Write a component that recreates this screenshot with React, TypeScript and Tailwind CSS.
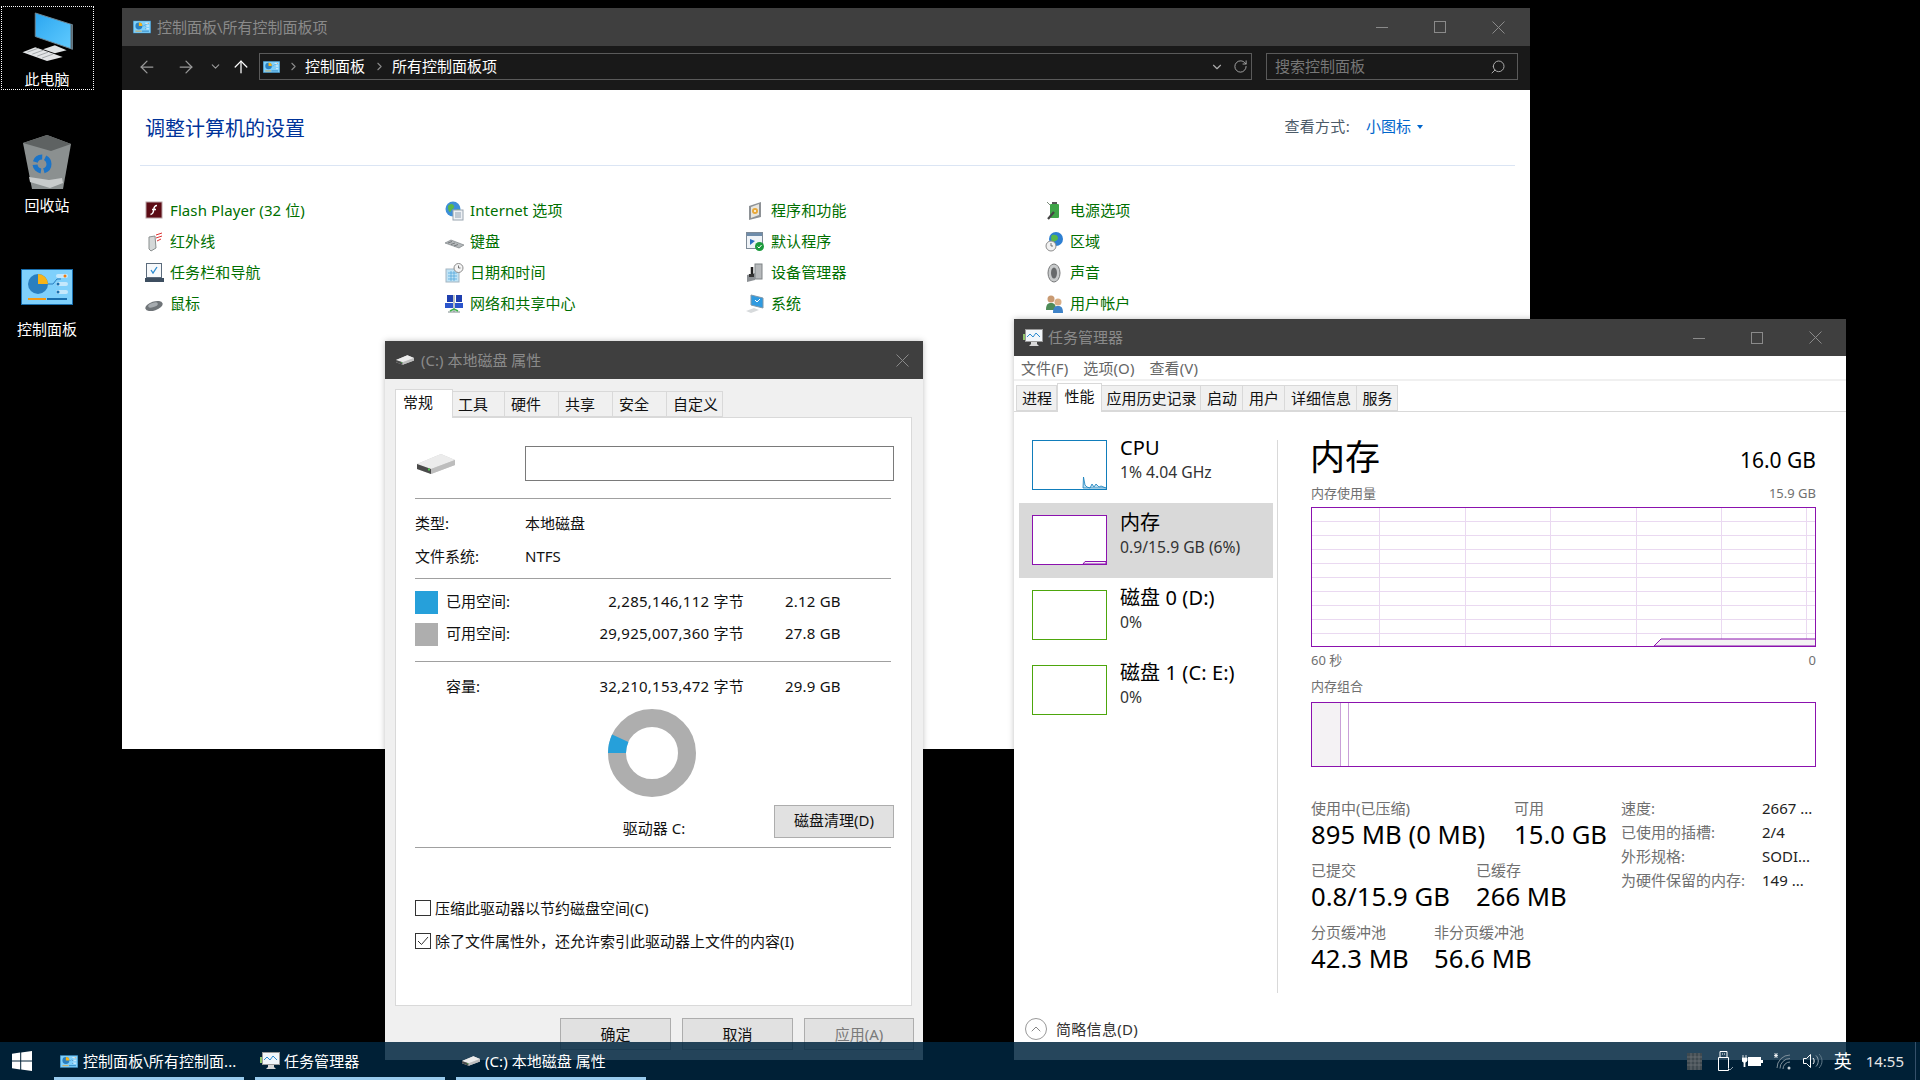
import React from "react";
import { ArrowLeft, ArrowRight, ArrowUp, ChevronDown, ChevronRight, ChevronUp, RotateCw, Search } from "lucide-react";

// small window chrome pieces
const CaptionButtons = ({ gap }: { gap: string }) => (
  <div className={`ml-auto flex items-center ${gap}`}>
    <svg width="12" height="12" viewBox="0 0 12 12" stroke="#8a8a8a" fill="none"><path d="M0 6.5h12" /></svg>
    <svg width="12" height="12" viewBox="0 0 12 12" stroke="#8a8a8a" fill="none"><rect x="0.5" y="0.5" width="11" height="11" /></svg>
    <CloseX />
  </div>
);

const CloseX = () => (
  <svg width="13" height="13" viewBox="0 0 13 13" stroke="#8a8a8a" fill="none"><path d="M0.5 0.5l12 12M12.5 0.5l-12 12" /></svg>
);

const ControlPanelIcon = ({ w, h }: { w: number; h: number }) => (
  <svg width={w} height={h} viewBox="0 0 52 36">
    <rect x="0.5" y="0.5" width="51" height="35" fill="#7fd0fb" stroke="#1a6fae" />
    <circle cx="17" cy="15" r="10" fill="#2a7fc0" />
    <path d="M17 5a10 10 0 0 1 10 10H17z" fill="#f8b418" />
    <path d="M27 15h5l4-5h4" stroke="#2a7fc0" fill="none" />
    <rect x="35" y="5" width="12" height="4" rx="2" fill="#c4e8fc" />
    <rect x="35" y="13" width="12" height="4" rx="2" fill="#c4e8fc" />
    <rect x="35" y="21" width="12" height="4" rx="2" fill="#c4e8fc" />
    <circle cx="44" cy="7" r="1.5" fill="#f07c10" />
    <circle cx="37" cy="15" r="1.5" fill="#1a6fae" />
    <circle cx="37" cy="23" r="1.5" fill="#1a6fae" />
    <path d="M7 30h18" stroke="#f59a14" strokeWidth="2" />
    <path d="M26 30h20" stroke="#1a6fae" strokeWidth="2" />
  </svg>
);

const DriveIcon = ({ w, h }: { w: number; h: number }) => (
  <svg width={w} height={h} viewBox="0 0 38 20">
    <path d="M0 10L24 0l14 6v5L14 20 0 15z" fill="#cfcfcf" />
    <path d="M0 10l14 5 24-9-14-6z" fill="#ececec" />
    <path d="M0 10l14 5v5L0 15z" fill="#4a4a4a" />
    <path d="M14 15l24-9v5L14 20z" fill="#bdbdbd" />
    <rect x="11" y="14.5" width="2" height="2" fill="#4fc24f" />
  </svg>
);

const TaskManagerIcon = () => (
  <svg width="20" height="18" viewBox="0 0 20 18">
    <rect x="2.5" y="0.5" width="17" height="12" fill="#f2f6fa" stroke="#9a9a9a" />
    <path d="M4 8l3-3 3 3 3-4 4 4" stroke="#2a8ad0" fill="none" />
    <rect x="0" y="5" width="2" height="6" fill="#8fc46a" />
    <path d="M8 13h6v2l2 2H6l2-2z" fill="#d8d8d8" />
  </svg>
);

// 16px-ish applet icons of the control panel list
const AppletIcon = ({ name }: { name: string }) => {
  const box = { width: 19, height: 20, viewBox: "0 0 19 20" };
  switch (name) {
    case "flash":
      return (
        <svg {...box}>
          <rect x="1" y="1" width="16" height="16" fill="#5c0b14" stroke="#b9a3a5" />
          <path d="M12 4.5c-3 0-3 2-3.3 4.5S8 13 5.5 13.5M7 8.5h4" stroke="#fff" strokeWidth="1.5" fill="none" />
        </svg>
      );
    case "infrared":
      return (
        <svg {...box}>
          <path d="M4 5l6-1 1 12-5 3-2-2z" fill="#d5d8d8" stroke="#8a8f8f" />
          <path d="M11 3l6-2M11 6l6-2M12 9l4-2" stroke="#d33" />
        </svg>
      );
    case "taskbar":
      return (
        <svg {...box}>
          <rect x="1.5" y="0.5" width="15" height="14" fill="#f7f9fb" stroke="#5b6b7c" />
          <path d="M6 7l2 3 4-6" stroke="#2a8ad0" fill="none" strokeWidth="1.3" />
          <rect x="0" y="15" width="19" height="4" fill="#3d4e60" />
        </svg>
      );
    case "mouse":
      return (
        <svg {...box}>
          <ellipse cx="9" cy="12" rx="9" ry="4.5" transform="rotate(-18 9 12)" fill="#6f7478" />
          <ellipse cx="8" cy="11" rx="5" ry="2.2" transform="rotate(-18 8 11)" fill="#a6abaf" />
        </svg>
      );
    case "internet":
      return (
        <svg {...box}>
          <circle cx="8" cy="8" r="7.5" fill="#3d8fd8" />
          <path d="M3 5c3-3 5-2 6 0s-2 3-3 5-3 1-3-5zM10 10l3-2 2 1-2 4z" fill="#5cb848" />
          <rect x="8" y="9" width="10" height="10" fill="#eef1f5" stroke="#9aa5b0" />
          <path d="M10 12h6M10 14h6M10 16h6" stroke="#8fa0b0" />
        </svg>
      );
    case "keyboard":
      return (
        <svg {...box}>
          <path d="M0 11l6-3 13 5-5 3z" fill="#b4b8ba" stroke="#6f7578" strokeWidth="0.6" />
          <path d="M3 11l4-1.5M6 12.5l4-1.5M9 14l4-1.5" stroke="#5a5f62" strokeWidth="0.7" />
        </svg>
      );
    case "datetime":
      return (
        <svg {...box}>
          <rect x="1" y="6" width="13" height="13" fill="#bfe3f6" stroke="#a5b6c2" />
          <path d="M3 10h9M3 13h9M3 16h9M6 8v10M9 8v10" stroke="#4aa0d8" strokeWidth="0.7" />
          <circle cx="13.5" cy="5" r="4.5" fill="#f4f4f4" stroke="#8c8c8c" />
          <path d="M13.5 2.5V5h2" stroke="#555" fill="none" strokeWidth="0.8" />
        </svg>
      );
    case "network":
      return (
        <svg {...box}>
          <rect x="2" y="1" width="6" height="7" fill="#1f3fae" />
          <rect x="11" y="1" width="6" height="7" fill="#1f3fae" />
          <rect x="0" y="9" width="8" height="5" fill="#2b55cc" />
          <rect x="10" y="9" width="8" height="5" fill="#2b55cc" />
          <path d="M9 1v17M3 18h12" stroke="#7a8a8a" />
          <path d="M5 17l4-2 4 2" stroke="#3fb04a" fill="none" strokeWidth="1.5" />
        </svg>
      );
    case "programs":
      return (
        <svg {...box}>
          <path d="M3 5l12-4v15l-12 3z" fill="#8e9296" />
          <path d="M5 6l8-3v11l-8 3z" fill="#e8e6df" />
          <circle cx="9" cy="10" r="3" fill="#e9a93a" />
          <circle cx="9" cy="10" r="1" fill="#fff" />
        </svg>
      );
    case "defaults":
      return (
        <svg {...box}>
          <rect x="0.5" y="0.5" width="16" height="16" fill="#eff3f7" stroke="#7d8a97" />
          <rect x="1" y="1" width="15" height="3" fill="#6e8caa" />
          <path d="M4 7l5 2-5 4z" fill="#2a6fc0" />
          <circle cx="13.5" cy="14.5" r="4.5" fill="#1c9a3c" />
          <path d="M11.5 14.5l1.500 1.500 2.500-3" stroke="#fff" fill="none" />
        </svg>
      );
    case "devices":
      return (
        <svg {...box}>
          <rect x="9" y="1" width="7" height="15" fill="#b7babc" stroke="#7f8386" />
          <path d="M1 12l8-2v7l-8 2z" fill="#8c9094" />
          <path d="M6 4v8" stroke="#222" strokeWidth="2.5" />
          <rect x="3" y="11" width="5" height="3" fill="#333" />
        </svg>
      );
    case "system":
      return (
        <svg {...box}>
          <path d="M5 1l12 3v10L5 11z" fill="#2f9ae0" stroke="#8097a8" />
          <path d="M9 6l2 2 3-3" stroke="#fff" fill="none" />
          <path d="M0 17l8-3 5 2-8 3z" fill="#d7dadc" />
        </svg>
      );
    case "power":
      return (
        <svg {...box}>
          <rect x="5" y="3" width="9" height="14" rx="1" fill="#3ea447" />
          <rect x="7" y="1" width="5" height="2" fill="#555" />
          <path d="M9 11L3 18" stroke="#444" strokeWidth="2.2" />
          <path d="M2 1l3 3" stroke="#7b8b7b" />
        </svg>
      );
    case "region":
      return (
        <svg {...box}>
          <circle cx="11" cy="7" r="7" fill="#2d7fd2" />
          <path d="M7 3c3-1 6 0 6 3s-4 3-5 5-3-6-1-8z" fill="#5ab84a" />
          <circle cx="6" cy="14" r="5" fill="#f1f1f1" stroke="#8c8c8c" />
          <path d="M6 11v3h2" stroke="#555" fill="none" strokeWidth="0.8" />
        </svg>
      );
    case "sound":
      return (
        <svg {...box}>
          <ellipse cx="9" cy="10" rx="6" ry="9" fill="#c8cacb" stroke="#77797a" />
          <ellipse cx="9" cy="10" rx="3" ry="5.5" fill="#67696b" />
        </svg>
      );
    default:
      return (
        <svg {...box}>
          <circle cx="6" cy="5" r="3.5" fill="#c99a72" />
          <path d="M1 16c0-6 2-7 5-7s5 1 5 7z" fill="#4e8b58" />
          <circle cx="13" cy="8" r="3.5" fill="#d9ae86" />
          <path d="M8 19c0-6 2-7 5-7s5 1 5 7z" fill="#3f83c8" />
        </svg>
      );
  }
};

const applets = [
  ["flash", "Flash Player (32 位)"],
  ["internet", "Internet 选项"],
  ["programs", "程序和功能"],
  ["power", "电源选项"],
  ["infrared", "红外线"],
  ["keyboard", "键盘"],
  ["defaults", "默认程序"],
  ["region", "区域"],
  ["taskbar", "任务栏和导航"],
  ["datetime", "日期和时间"],
  ["devices", "设备管理器"],
  ["sound", "声音"],
  ["mouse", "鼠标"],
  ["network", "网络和共享中心"],
  ["system", "系统"],
  ["users", "用户帐户"],
];

const ControlPanelWindow = () => (
  <div className="absolute left-[122px] top-[8px] flex h-[741px] w-[1408px] flex-col bg-white">
    <div className="flex h-[38px] shrink-0 items-center bg-[#3f3f3f] pl-[11px] pr-[25px] text-[15px] text-[#8a8a8a]">
      <ControlPanelIcon w={18} h={14} />
      <span className="ml-[6px]">控制面板\所有控制面板项</span>
      <CaptionButtons gap="gap-[46px]" />
    </div>
    <div className="flex h-[44px] shrink-0 items-center bg-[#191919] pb-[3px] text-[15px] text-white">
      <ArrowLeft className="ml-[15px] text-[#9a9a9a]" size={20} strokeWidth={1.5} />
      <ArrowRight className="ml-[19px] text-[#9a9a9a]" size={20} strokeWidth={1.5} />
      <ChevronDown className="ml-[13px] text-[#9a9a9a]" size={13} strokeWidth={2} />
      <ArrowUp className="ml-[9px] text-white" size={20} strokeWidth={1.5} />
      <div className="ml-[8px] flex h-[27px] w-[993px] items-center border border-[#5a5a5a] pl-[3px]">
        <ControlPanelIcon w={17} h={14} />
        <ChevronRight className="ml-[7px] text-[#8a8a8a]" size={13} />
        <span className="ml-[5px]">控制面板</span>
        <ChevronRight className="ml-[8px] text-[#8a8a8a]" size={13} />
        <span className="ml-[6px]">所有控制面板项</span>
        <ChevronDown className="ml-auto text-[#aaaaaa]" size={14} strokeWidth={2} />
        <RotateCw className="ml-[9px] mr-[3px] text-[#aaaaaa]" size={15} strokeWidth={1.5} />
      </div>
      <div className="ml-[14px] flex h-[27px] w-[252px] items-center border border-[#5a5a5a] pl-[8px] pr-[11px] text-[#777777]">
        搜索控制面板
        <Search className="ml-auto -scale-x-100 text-[#aaaaaa]" size={16} strokeWidth={1.5} />
      </div>
    </div>
    <div className="ml-[18px] mr-[15px] flex h-[76px] shrink-0 items-center border-b border-[#dbe5f4] pl-[5px] pr-[92px]">
      <h1 className="pt-[2px] text-[20px] text-[#003399]">调整计算机的设置</h1>
      <span className="ml-auto pb-[2px] text-[15px] tracking-[0.3px] text-[#4c5a68]">查看方式:</span>
      <span className="ml-[16px] pb-[2px] text-[15px] text-[#0066cc]">小图标</span>
      <span className="mb-[2px] ml-[6px] h-0 w-0 border-x-[3px] border-t-[4px] border-x-transparent border-t-[#0066cc]" />
    </div>
    <div className="grid grid-cols-[300px_301px_299px_300px] pl-[23px] pt-[29px] text-[15px] tracking-[0.1px] text-[#006f00]">
      {applets.map(([icon, label]) => (
        <div key={icon} className="flex h-[31px] items-center">
          <div className="w-[25px]">
            <AppletIcon name={icon} />
          </div>
          {label}
        </div>
      ))}
    </div>
  </div>
);

const DialogTab = ({ label, active, w, pad }: { label: string; active?: boolean; w: string; pad: string }) => (
  <div
    className={`flex items-center border border-[#d9d9d9] ${w} ${pad} ${
      active ? "z-10 -mb-px h-[29px] border-b-0 bg-white pb-[3px]" : "-ml-px h-[26px] bg-[#f0f0f0]"
    }`}
  >
    {label}
  </div>
);

const Rule = ({ className }: { className: string }) => <div className={`h-px w-[476px] bg-[#a0a0a0] ${className}`} />;

const DialogButton = ({ label, className }: { label: string; className?: string }) => (
  <div className={`flex items-center justify-center border border-[#adadad] bg-[#e1e1e1] ${className}`}>{label}</div>
);

const SpaceRow = ({ swatch, label, bytes, size, className }: { swatch?: string; label: string; bytes: string; size: string; className?: string }) => (
  <div className={`flex h-[32px] items-center ${className}`}>
    <div className={`h-[23px] w-[23px] ${swatch}`} />
    <span className="ml-[8px] w-[100px] pb-[2px]">{label}</span>
    <span className="w-[198px] pb-[2px] text-right tracking-[0.25px]">{bytes}</span>
    <span className="ml-[41px] pb-[2px] tracking-[0.2px]">{size}</span>
  </div>
);

const Check = ({ checked }: { checked?: boolean }) => (
  <div className="flex h-[16px] w-[16px] shrink-0 items-center justify-center border border-[#333333] bg-white">
    {checked && (
      <svg width="12" height="10" viewBox="0 0 12 10" fill="none" stroke="#333"><path d="M1 5l3.500 3.500L11 1" /></svg>
    )}
  </div>
);

const PropertiesDialog = () => (
  <div className="absolute left-[385px] top-[341px] flex h-[719px] w-[538px] flex-col bg-[#f0f0f0] text-[15px] text-[#111111] shadow-[0_0_6px_rgba(0,0,0,0.25)]">
    <div className="flex h-[38px] shrink-0 items-center bg-[#3f3f3f] pl-[11px] pr-[14px] text-[#8a8a8a]">
      <DriveIcon w={18} h={10} />
      <span className="ml-[7px]">(C:) 本地磁盘 属性</span>
      <div className="ml-auto"><CloseX /></div>
    </div>
    <div className="flex h-[38px] shrink-0 items-end pl-[10px]">
      <DialogTab label="常规" active w="w-[58px]" pad="pl-[7px]" />
      <DialogTab label="工具" w="w-[53px]" pad="pl-[5px]" />
      <DialogTab label="硬件" w="w-[55px]" pad="pl-[6px]" />
      <DialogTab label="共享" w="w-[55px]" pad="pl-[6px]" />
      <DialogTab label="安全" w="w-[55px]" pad="pl-[6px]" />
      <DialogTab label="自定义" w="w-[57px]" pad="pl-[6px]" />
    </div>
    <div className="ml-[10px] h-[589px] w-[517px] border border-[#d9d9d9] bg-white pl-[19px] pt-[28px]">
      <div className="flex h-[35px] items-center">
        <div className="w-[110px] pl-[2px]"><DriveIcon w={38} h={20} /></div>
        <div className="h-[35px] w-[369px] border border-[#7a7a7a]" />
      </div>
      <Rule className="mt-[17px]" />
      <div className="mt-[8px] flex h-[33px] items-center"><span className="w-[110px]">类型:</span>本地磁盘</div>
      <div className="flex h-[33px] items-center"><span className="w-[110px]">文件系统:</span>NTFS</div>
      <Rule className="mt-[5px]" />
      <SpaceRow className="mt-[7px]" swatch="bg-[#26a0da]" label="已用空间:" bytes="2,285,146,112 字节" size="2.12 GB" />
      <SpaceRow swatch="bg-[#aeaeae]" label="可用空间:" bytes="29,925,007,360 字节" size="27.8 GB" />
      <Rule className="mt-[11px]" />
      <SpaceRow className="mt-[9px]" label="容量:" bytes="32,210,153,472 字节" size="29.9 GB" />
      <svg className="ml-[193px] mt-[6px]" width="88" height="88" viewBox="0 0 88 88">
        <circle cx="44" cy="44" r="35" fill="none" stroke="#aeaeae" strokeWidth="18" />
        <path d="M0 44A44 44 0 0 1 4.100 25.400L20.400 33A26 26 0 0 0 18 44z" fill="#26a0da" />
      </svg>
      <div className="mt-[8px] flex h-[33px]">
        <div className="w-[359px] pl-[119px] pt-[15px] text-center leading-[17px]">驱动器 C:</div>
        <DialogButton label="磁盘清理(D)" className="w-[120px] pb-[2px]" />
      </div>
      <Rule className="mt-[9px]" />
      <div className="mt-[46px] flex h-[28px] items-center gap-[4px]"><Check />压缩此驱动器以节约磁盘空间(C)</div>
      <div className="mt-[5px] flex h-[28px] items-center gap-[4px]"><Check checked />除了文件属性外，还允许索引此驱动器上文件的内容(I)</div>
    </div>
    <div className="ml-[175px] mt-[12px] flex h-[32px] gap-[11px]">
      <DialogButton label="确定" className="w-[111px]" />
      <DialogButton label="取消" className="w-[111px]" />
      <DialogButton label="应用(A)" className="w-[110px] bg-[#cccccc] text-[#7a7a7a]" />
    </div>
  </div>
);

const ManagerTab = ({ label, active, w }: { label: string; active?: boolean; w: string }) => (
  <div
    className={`flex items-center justify-center border border-[#d9d9d9] ${w} ${
      active ? "z-10 -mb-px h-[29px] border-b-0 bg-white pb-[3px]" : "-ml-px h-[26px] bg-[#f0f0f0] pl-[1px] pt-[1px]"
    }`}
  >
    {label}
  </div>
);

const Resource = ({ title, sub, border, selected, children }: { title: string; sub: string; border: string; selected?: boolean; children?: React.ReactNode }) => (
  <div className={`flex h-[75px] w-[254px] items-start pl-[13px] pt-[8px] ${selected ? "bg-[#d9d9d9]" : ""}`}>
    <div className={`mt-[4px] h-[50px] w-[75px] shrink-0 border bg-white ${border}`}>{children}</div>
    <div className="ml-[13px]">
      <div className="h-[24px] text-[20px] leading-[24px] tracking-[0.1px] text-black">{title}</div>
      <div className="h-[24px] text-[15.700px] leading-[24px] text-[#333333]">{sub}</div>
    </div>
  </div>
);

const Stat = ({ label, value, w }: { label: string; value: string; w: string }) => (
  <div className={w}>
    <div className="h-[20px] text-[15px] leading-[18px] text-[#707070]">{label}</div>
    <div className="h-[32px] whitespace-nowrap text-[25.700px] leading-[31px] text-black">{value}</div>
  </div>
);

const MemoryChart = () => {
  const rows = [14, 28, 42, 56, 70, 84, 98, 112, 126];
  const cols = [68, 154, 239, 325, 410, 495];
  return (
    <svg className="mt-[3px] block" width="505" height="140" viewBox="0 0 505 140">
      {rows.map((y) => (
        <path key={y} d={`M0 ${y + 0.5}H505`} stroke="#ead9f1" />
      ))}
      {cols.map((x) => (
        <path key={x} d={`M${x + 0.5} 0V140`} stroke="#ead9f1" />
      ))}
      <path d="M343 139L350 132H505V139z" fill="#f4f2f4" stroke="#8b12ae" strokeWidth="1" />
      <rect x="0.5" y="0.5" width="504" height="139" fill="none" stroke="#8b12ae" />
    </svg>
  );
};

const TaskManager = () => (
  <div className="absolute left-[1014px] top-[319px] flex h-[741px] w-[832px] flex-col bg-white text-[15px] shadow-[0_0_6px_rgba(0,0,0,0.25)]">
    <div className="flex h-[37px] shrink-0 items-center bg-[#3f3f3f] pl-[9px] pr-[24px] text-[#8a8a8a]">
      <TaskManagerIcon />
      <span className="ml-[5px]">任务管理器</span>
      <CaptionButtons gap="gap-[46px]" />
    </div>
    <div className="flex h-[25px] shrink-0 items-center gap-[15px] border-b-2 border-[#f0f0f0] pl-[7px] pt-[1px] tracking-[0.1px] text-[#666666]">
      <span>文件(F)</span>
      <span>选项(O)</span>
      <span>查看(V)</span>
    </div>
    <div className="flex h-[31px] shrink-0 items-end border-b border-[#d9d9d9] pl-[3px] text-[#111111]">
      <ManagerTab label="进程" w="w-[41px]" />
      <ManagerTab label="性能" active w="w-[45px]" />
      <ManagerTab label="应用历史记录" w="w-[100px]" />
      <ManagerTab label="启动" w="w-[43px]" />
      <ManagerTab label="用户" w="w-[43px]" />
      <ManagerTab label="详细信息" w="w-[73px]" />
      <ManagerTab label="服务" w="w-[42px]" />
    </div>
    <div className="flex h-[602px] shrink-0">
      <div className="ml-[5px] w-[258px] pt-[16px]">
        <Resource title="CPU" sub="1% 4.04 GHz" border="border-[#117dbb]">
          <svg width="73" height="48" viewBox="0 0 73 48">
            <path d="M50 47L50.500 36L52 44L54 46L57 47L59 43L61 46L63 43L66 46L68 45L73 47z" fill="#bcdcef" stroke="#117dbb" strokeWidth="0.8" />
          </svg>
        </Resource>
        <Resource title="内存" sub="0.9/15.9 GB (6%)" border="border-[#8b12ae]" selected>
          <svg width="73" height="48" viewBox="0 0 73 48">
            <path d="M50 48L52 45.500H73V48z" fill="#f4f2f4" stroke="#8b12ae" />
          </svg>
        </Resource>
        <Resource title="磁盘 0 (D:)" sub="0%" border="border-[#4da60c]" />
        <Resource title="磁盘 1 (C: E:)" sub="0%" border="border-[#4da60c]" />
      </div>
      <div className="mt-[28px] h-[553px] w-px bg-[#d9d9d9]" />
      <div className="ml-[33px] w-[505px] pt-[24px]">
        <div className="flex h-[42px] items-center justify-between">
          <span className="-ml-[1px] text-[35px] leading-[42px] text-black">内存</span>
          <span className="pt-[8px] text-[21px] text-black">16.0 GB</span>
        </div>
        <div className="mt-[6px] flex h-[20px] justify-between text-[13px] leading-[19px] text-[#707070]">
          <span>内存使用量</span>
          <span>15.9 GB</span>
        </div>
        <MemoryChart />
        <div className="mt-[3px] flex h-[20px] justify-between text-[13px] leading-[20px] text-[#707070]">
          <span>60 秒</span>
          <span>0</span>
        </div>
        <div className="mt-[7px] h-[20px] text-[13px] leading-[19px] text-[#707070]">内存组合</div>
        <div className="mt-[5px] flex h-[65px] border border-[#8b12ae]">
          <div className="w-[29px] border-r border-[#c9a0d8] bg-[#f4f2f4]" />
          <div className="w-[8px] border-r border-[#c9a0d8]" />
        </div>
        <div className="mt-[32px] flex">
          <div className="w-[310px]">
            <div className="flex">
              <Stat label="使用中(已压缩)" value="895 MB (0 MB)" w="w-[203px]" />
              <Stat label="可用" value="15.0 GB" w="w-[100px]" />
            </div>
            <div className="mt-[10px] flex">
              <Stat label="已提交" value="0.8/15.9 GB" w="w-[165px]" />
              <Stat label="已缓存" value="266 MB" w="w-[100px]" />
            </div>
            <div className="mt-[10px] flex">
              <Stat label="分页缓冲池" value="42.3 MB" w="w-[123px]" />
              <Stat label="非分页缓冲池" value="56.6 MB" w="w-[100px]" />
            </div>
          </div>
          <div className="-mt-[3px] grid grid-cols-[141px_1fr] auto-rows-[24px] items-center whitespace-nowrap">
            <span className="text-[#707070]">速度:</span><span className="text-[#222222]">2667 ...</span>
            <span className="text-[#707070]">已使用的插槽:</span><span className="text-[#222222]">2/4</span>
            <span className="text-[#707070]">外形规格:</span><span className="text-[#222222]">SODI...</span>
            <span className="text-[#707070]">为硬件保留的内存:</span><span className="text-[#222222]">149 ...</span>
          </div>
        </div>
      </div>
    </div>
    <div className="flex h-[30px] shrink-0 items-center pl-[11px] tracking-[0.3px] text-[#333333]">
      <div className="flex h-[22px] w-[22px] items-center justify-center rounded-full border border-[#999999]">
        <ChevronUp className="text-[#666666]" size={16} strokeWidth={1.2} />
      </div>
      <span className="ml-[9px]">简略信息(D)</span>
    </div>
  </div>
);

const DesktopIcons = () => (
  <div className="flex w-[94px] flex-col items-center pt-[6px] text-[15px] leading-[20px] text-white">
    <div className="flex h-[84px] w-[93px] flex-col items-center border border-dotted border-white pt-[5px]">
      <svg width="51" height="50" viewBox="0 0 51 50">
        <defs>
          <linearGradient id="screen" x1="0" y1="0" x2="1" y2="1">
            <stop offset="0" stopColor="#2ba6f0" />
            <stop offset="1" stopColor="#62ccff" />
          </linearGradient>
        </defs>
        <path d="M13 1l38 12v25L13 25z" fill="url(#screen)" stroke="#6f8796" />
        <path d="M49 13v24l2 1V13z" fill="#5d6a72" />
        <path d="M21 38l12-4 12 5-12 3z" fill="#dfe3e5" />
        <path d="M0 41l13-5 28 10-16 4z" fill="#e2e4e6" />
        <path d="M5 41l11-4M10 43l11-4M15 45l11-4M20 47l11-4" stroke="#a3a7aa" />
      </svg>
      <span className="mt-[8px]">此电脑</span>
    </div>
    <svg className="mt-[45px]" width="48" height="54" viewBox="0 0 48 54">
      <path d="M0 8L24 0l24 9-8 45H9z" fill="#8b9090" />
      <path d="M0 8L24 0l24 9-20 7z" fill="#5e6262" />
      <path d="M7 47l20 6 13-5-1-5-13 2-20-3z" fill="#c8cbcb" />
      <circle cx="19" cy="29" r="7" fill="none" stroke="#1b74c8" strokeWidth="5" strokeDasharray="9 3" />
    </svg>
    <span className="mt-[6px]">回收站</span>
    <div className="mt-[54px]"><ControlPanelIcon w={52} h={36} /></div>
    <span className="mt-[14px]">控制面板</span>
  </div>
);

const TaskItem = ({ icon, label }: { icon: React.ReactNode; label: string }) => (
  <div className="relative flex h-[38px] w-[190px] items-center pl-[6px] text-[15px] tracking-[0.05px] text-white">
    {icon}
    <span className="ml-[5px] whitespace-nowrap">{label}</span>
    <div className="absolute inset-x-0 bottom-0 h-[3px] bg-[#99cbed]" />
  </div>
);

const Taskbar = () => (
  <div className="absolute bottom-0 left-0 flex h-[38px] w-[1920px] items-center bg-[rgba(0,38,63,0.85)]">
    <svg className="ml-[12px]" width="20" height="20" viewBox="0 0 20 20" fill="#fff">
      <path d="M0 2.800L8.200 1.600V9.500H0zM9.200 1.500L20 0V9.500H9.200zM0 10.500H8.200V18.400L0 17.200zM9.200 10.500H20V20L9.200 18.500z" />
    </svg>
    <div className="ml-[22px] flex gap-[11px]">
      <TaskItem icon={<ControlPanelIcon w={18} h={15} />} label="控制面板\所有控制面..." />
      <TaskItem icon={<div className="-mx-px"><TaskManagerIcon /></div>} label="任务管理器" />
      <TaskItem icon={<DriveIcon w={18} h={10} />} label="(C:) 本地磁盘 属性" />
    </div>
    <div className="ml-auto flex items-center text-white">
      <svg width="15" height="17" viewBox="0 0 15 17" fill="#3f4a50"><rect width="15" height="17" /><path d="M0 4h15M0 8h15M0 12h15M4 0v17M8 0v17M12 0v17" stroke="#70777c" strokeWidth="0.7" /></svg>
      <svg className="ml-[15px]" width="17" height="20" viewBox="0 0 17 20" fill="none" stroke="#fff"><path d="M3 .5h7v6H3zM1.500 6.500h10v13h-10zM5 3h1M7 3h1" /><path d="M11 17l2 2 3-3" stroke="#8fa0ac" /></svg>
      <svg className="ml-[8px]" width="21" height="12" viewBox="0 0 21 12" fill="#fff"><path d="M0 3v3l2 1.500V12h1V7.500L5 6V3zM1 0v3M4 0v3" stroke="#fff" strokeWidth="0.8" /><rect x="6.500" y="2.500" width="12" height="8" fill="#fff" stroke="#fff" /><rect x="19" y="5" width="2" height="3" /></svg>
      <svg className="ml-[11px]" width="18" height="18" viewBox="0 0 18 18" fill="none" stroke="#7f8f9a"><path d="M3 16a13 13 0 0 1 13-13M6 16.500a10 10 0 0 1 10-10M9 17a7 7 0 0 1 7-7" /><circle cx="15" cy="16" r="1.500" fill="#c8d0d6" stroke="none" /><path d="M2 1v5M0 3.500h4M0.500 1.500l3 4M3.500 1.500l-3 4" stroke="#fff" strokeWidth="0.8" /></svg>
      <svg className="ml-[11px]" width="20" height="16" viewBox="0 0 20 16" fill="none" stroke="#fff"><path d="M.5 5.500h3l4-4v13l-4-4h-3z" /><path d="M10 5c1.500 1.500 1.500 4.500 0 6" /><path d="M13 2.500c3 3 3 8 0 11" stroke="#8fa0ac" /><path d="M16 1c4 4 4 10 0 14" stroke="#5f7888" /></svg>
      <span className="ml-[11px] text-[18px] leading-[20px]">英</span>
      <span className="ml-[14px] text-[15px] text-[#e6e6e6]">14:55</span>
      <div className="ml-[11px] mr-[4px] h-[38px] w-px bg-[#35506a]" />
    </div>
  </div>
);

export default function App() {
  return (
    <div className="relative h-[1080px] w-[1920px] overflow-hidden bg-black font-['Noto_Sans','Noto_Sans_CJK_SC',sans-serif]">
      <DesktopIcons />
      <ControlPanelWindow />
      <PropertiesDialog />
      <TaskManager />
      <Taskbar />
    </div>
  );
}
